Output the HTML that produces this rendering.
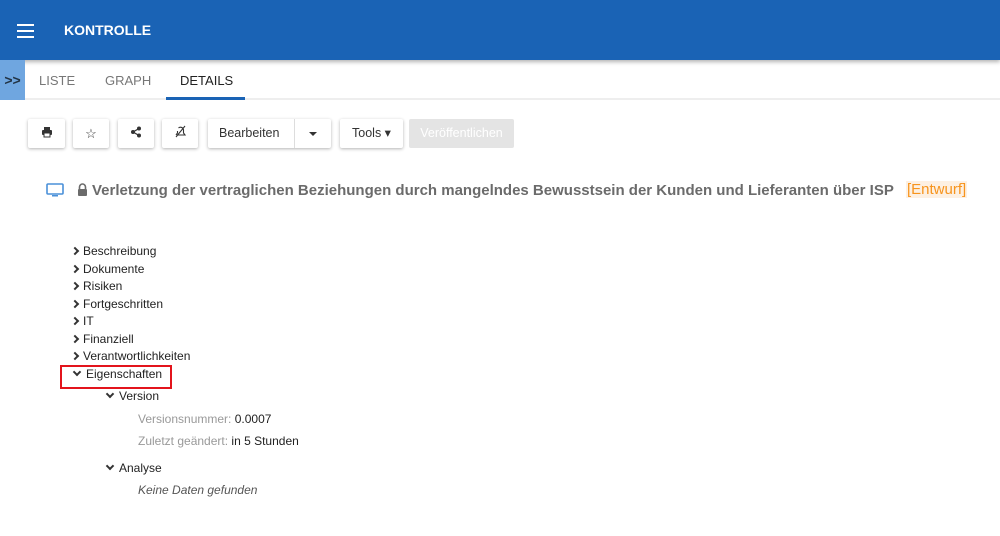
<!DOCTYPE html><html><head><style>
*{margin:0;padding:0;box-sizing:border-box}
body{width:1000px;height:536px;overflow:hidden;background:#fff;font-family:"Liberation Sans",sans-serif;position:relative}
.hdr{position:absolute;left:0;top:0;width:1000px;height:60px;background:#1a63b5;box-shadow:0 2px 4px rgba(0,0,0,.3)}
.hdr .ham{position:absolute;left:17px;top:24px;width:17px}
.hdr .ham i{display:block;height:2px;background:#fff;margin-bottom:4px}
.hdr .t{position:absolute;left:64px;top:22px;color:#fff;font-weight:bold;font-size:14px}
.side{position:absolute;left:0;top:60px;width:25px;height:40px;background:#6fa6e0;color:#234;font-weight:bold;font-size:14px;text-align:center;line-height:40px}
.tabs{position:absolute;left:25px;top:60px;width:975px;height:40px;border-bottom:2px solid #eee}
.tab{position:absolute;top:13px;font-size:13px;color:#777}
.btn{position:absolute;top:119px;height:29px;background:#fff;box-shadow:0 1px 3px rgba(0,0,0,.3);border-radius:2px;font-size:12.5px;color:#333;line-height:29px;text-align:center}
.title{position:absolute;left:92px;top:182px;font-size:15px;font-weight:bold;color:#6b6b6b;white-space:nowrap}
.ent{position:absolute;left:906px;top:181px;font-size:15px;color:#f7941d;background:#fdf0e2;padding:0 1px}
.it{position:absolute;font-size:12px;color:#222;white-space:nowrap}
.ar{display:inline-block;width:6px;height:6px;border-right:2.4px solid #333;border-bottom:2.4px solid #333;transform:rotate(-45deg);margin-right:5px;vertical-align:1px}
.dn{transform:rotate(45deg);vertical-align:3px;margin-right:6px}
.g{color:#999}
</style></head><body>
<div class="hdr"><div class="ham"><i></i><i></i><i></i></div><div class="t">KONTROLLE</div></div>
<div class="side">&gt;&gt;</div>
<div class="tabs">
<div class="tab" style="left:14px">LISTE</div>
<div class="tab" style="left:80px">GRAPH</div>
<div class="tab" style="left:155px;color:#222">DETAILS</div>
<div style="position:absolute;left:141px;top:37px;width:79px;height:3px;background:#1a63b5"></div>
</div>
<div class="btn" style="left:28px;width:37px"><svg width="12" height="12" viewBox="0 0 12 12" style="vertical-align:-1px"><rect x="3" y="1" width="6" height="3" fill="#333"/><rect x="1" y="4" width="10" height="5" rx="1" fill="#333"/><rect x="3" y="7" width="6" height="4" fill="#fff" stroke="#333"/></svg></div>
<div class="btn" style="left:73px;width:36px;font-size:13px">☆</div>
<div class="btn" style="left:118px;width:36px"><svg width="12" height="12" viewBox="0 0 12 12" style="vertical-align:-1px"><circle cx="3" cy="6" r="2" fill="#333"/><circle cx="9" cy="2.5" r="2" fill="#333"/><circle cx="9" cy="9.5" r="2" fill="#333"/><path d="M3 6L9 2.5M3 6L9 9.5" stroke="#333" stroke-width="1.3"/></svg></div>
<div class="btn" style="left:162px;width:36px"><svg width="13" height="13" viewBox="0 0 13 13" style="vertical-align:-1px" fill="none" stroke="#333" stroke-width="1.1"><path d="M3 10h8L9.5 8V5a3 3 0 0 0-5-2M2 12L11 1"/><path d="M3.5 6v2L2 10"/></svg></div>
<div class="btn" style="left:208px;width:123px;text-align:left;padding-left:11px">Bearbeiten<span style="position:absolute;left:86px;top:0;width:1px;height:29px;background:#ddd"></span><span style="position:absolute;left:101px;top:13px;border:4px solid transparent;border-top-color:#333;border-bottom:0"></span></div>
<div class="btn" style="left:340px;width:63px">Tools ▾</div>
<div class="btn" style="left:409px;width:105px;background:#e4e4e4;color:#fff;box-shadow:none">Veröffentlichen</div>
<svg style="position:absolute;left:46px;top:183px" width="18" height="15" viewBox="0 0 18 15"><rect x="1" y="1" width="16" height="10" rx="1" fill="none" stroke="#4a90d9" stroke-width="1.6"/><rect x="6" y="12" width="6" height="1.5" fill="#4a90d9"/></svg>
<svg style="position:absolute;left:77px;top:183px" width="11" height="13" viewBox="0 0 11 13"><path d="M2.5 6V4a3 3 0 0 1 6 0v2" fill="none" stroke="#6b6b6b" stroke-width="1.6"/><rect x="1" y="6" width="9" height="7" rx="1" fill="#6b6b6b"/></svg>
<div class="title">Verletzung der vertraglichen Beziehungen durch mangelndes Bewusstsein der Kunden und Lieferanten über ISP</div>
<div class="ent">[Entwurf]</div>
<div class="it" style="left:72px;top:244px"><span class="ar"></span>Beschreibung</div>
<div class="it" style="left:72px;top:262px"><span class="ar"></span>Dokumente</div>
<div class="it" style="left:72px;top:279px"><span class="ar"></span>Risiken</div>
<div class="it" style="left:72px;top:297px"><span class="ar"></span>Fortgeschritten</div>
<div class="it" style="left:72px;top:314px"><span class="ar"></span>IT</div>
<div class="it" style="left:72px;top:332px"><span class="ar"></span>Finanziell</div>
<div class="it" style="left:72px;top:349px"><span class="ar"></span>Verantwortlichkeiten</div>
<div style="position:absolute;left:60px;top:365px;width:112px;height:24px;border:2px solid #e3141c"></div>
<div class="it" style="left:74px;top:367px"><span class="ar dn"></span>Eigenschaften</div>
<div class="it" style="left:107px;top:389px"><span class="ar dn"></span>Version</div>
<div class="it" style="left:138px;top:412px"><span class="g">Versionsnummer:</span> 0.0007</div>
<div class="it" style="left:138px;top:434px"><span class="g">Zuletzt geändert:</span> in 5 Stunden</div>
<div class="it" style="left:107px;top:461px"><span class="ar dn"></span>Analyse</div>
<div class="it" style="left:138px;top:483px;font-style:italic;color:#555">Keine Daten gefunden</div>
</body></html>
